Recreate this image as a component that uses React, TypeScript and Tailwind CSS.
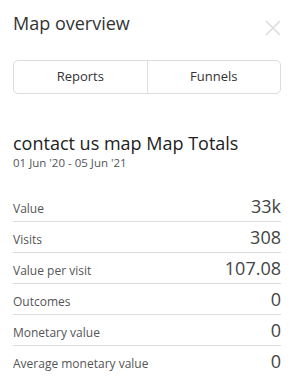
import React from "react";

interface Row {
  label: string;
  value: string;
}

const rows: Row[] = [
  { label: "Value", value: "33k" },
  { label: "Visits", value: "308" },
  { label: "Value per visit", value: "107.08" },
  { label: "Outcomes", value: "0" },
  { label: "Monetary value", value: "0" },
  { label: "Average monetary value", value: "0" },
];

export default function App() {
  return (
    <div
      className="w-[293px] h-[391px] bg-white overflow-hidden text-[#333]"
      style={{ fontFamily: '"Open Sans", sans-serif' }}
    >
      <div className="pl-[13px] pr-[12px]">
        {/* Header */}
        <div className="flex items-start justify-between pt-[11px]">
          <h1 className="text-[18px] leading-[24px] font-normal text-[#333]">Map overview</h1>
          <button className="mt-[9px] text-[#ddd]">
            <svg width="16" height="16" viewBox="0 0 16 16" fill="none" stroke="currentColor" strokeWidth="1.6">
              <path d="M1 1 L15 15 M15 1 L1 15" />
            </svg>
          </button>
        </div>

        {/* Tabs */}
        <div className="mt-[24px] flex h-[34px] rounded-[5px] border border-[#ddd]">
          <div className="flex-1 flex items-center justify-center text-[13px] text-[#333] border-r border-[#ddd]">
            Reports
          </div>
          <div className="flex-1 flex items-center justify-center text-[13px] text-[#333]">
            Funnels
          </div>
        </div>

        {/* Totals */}
        <div className="mt-[37px]">
          <h2 className="text-[18px] leading-[24px] font-normal text-[#222]">contact us map Map Totals</h2>
          <p className="text-[11.5px] leading-[16px] text-[#555]">01 Jun '20 - 05 Jun '21</p>
        </div>

        <div className="mt-[20px]">
          {rows.map((r, i) => (
            <div
              key={r.label}
              className={`flex items-baseline justify-between pt-[3px] pb-[3px] ${
                i < rows.length - 1 ? "border-b border-[#ddd]" : ""
              }`}
            >
              <span className="text-[12px] text-[#555]">{r.label}</span>
              <span className="text-[18px] leading-[24px] text-[#444]">{r.value}</span>
            </div>
          ))}
        </div>
      </div>
    </div>
  );
}
